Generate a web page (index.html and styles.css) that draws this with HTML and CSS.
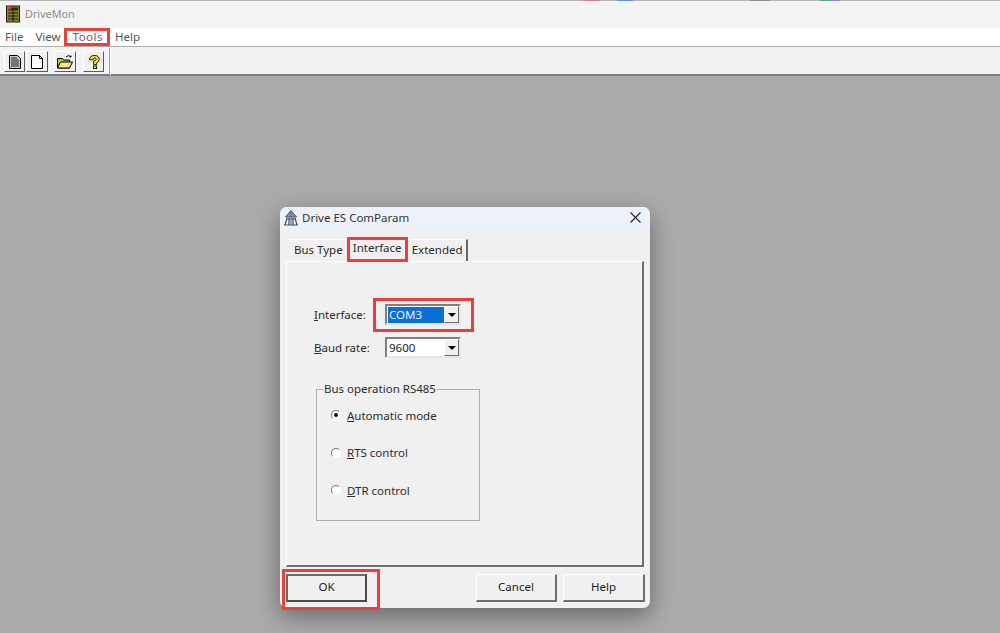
FILE: index.html
```html
<!DOCTYPE html>
<html lang="en">
<head>
<meta charset="utf-8">
<title>DriveMon</title>
<link rel="stylesheet" href="styles.css">
</head>
<body>
<div class="app">
  <div class="crop-strip"></div>
  <header class="titlebar">
    <svg class="app-icon" width="16" height="18" viewBox="0 0 16 18">
      <rect x="1.500" y="1" width="13" height="16" fill="#8a8434" stroke="#1e1e10"/>
      <rect x="3" y="2.500" width="10" height="3" fill="#2b2a12"/>
      <path d="M3 8h10M3 11h10M3 14h10M8 6v10" stroke="#1e1e10" stroke-width="1.200"/>
      <rect x="3" y="1.500" width="3" height="3" fill="#e0402a"/>
    </svg>
    <span class="app-name">DriveMon</span>
  </header>
  <nav class="menubar">
    <span class="menu-item">File</span>
    <span class="menu-item">View</span>
    <span class="menu-item mark">Tools</span>
    <span class="menu-item">Help</span>
  </nav>
  <div class="toolbar">
    <button class="tool tool-a">
      <svg width="14" height="16" viewBox="0 0 14 16"><path d="M1.500 1.500h8l3 3v10h-11z" fill="#c8c8c8" stroke="#000"/><path d="M3 4h6M3 6h8M3 8h8M3 10h8M3 12h8" stroke="#222"/></svg>
    </button>
    <button class="tool tool-b">
      <svg width="14" height="16" viewBox="0 0 14 16"><path d="M1.500 1.500h8l3 3v10h-11z" fill="#fff" stroke="#000"/><path d="M9.500 1.500v3h3" fill="none" stroke="#000"/></svg>
    </button>
    <button class="tool tool-c">
      <svg width="18" height="16" viewBox="0 0 18 16"><path d="M1.500 4.500h5l1 1.500h6v8h-12z" fill="#c9c23c" stroke="#000"/><path d="M1.500 14l3-6h12l-3 6z" fill="#f0e88a" stroke="#000"/><path d="M10 3q3-3 5 0M15 3l-1.500-.5M15 3v-1.500" fill="none" stroke="#000"/></svg>
    </button>
    <button class="tool tool-d">
      <svg width="14" height="18" viewBox="0 0 16 18"><path d="M3 6.500q0-5 5.500-5t5.500 4.500q0 2.500-3 4v2H7.500v-4q3-.5 3-2.500 0-1.200-1.800-1.200T7 6.500z" fill="#f2e536" stroke="#000"/><rect x="7.500" y="13.500" width="3.500" height="3" fill="#f2e536" stroke="#000"/></svg>
    </button>
    <div class="tool-sep"></div>
  </div>
  <main class="workspace">
    <section class="dialog">
      <header class="dialog-title">
        <svg class="dialog-icon" width="16" height="16" viewBox="0 0 16 16">
          <path d="M8 .5 2.500 7h11z" fill="#8b919c" stroke="#4a4f58"/>
          <path d="M3 9h10M1 15h14M4 8l-2 7M12 8l2 7M6 8v7M10 8v7" stroke="#4a4f58" stroke-width="1.200"/>
          <path d="M8 1v14" stroke="#5c78b8" stroke-width="1.200"/>
        </svg>
        <span class="dialog-name">Drive ES ComParam</span>
        <svg class="dialog-close" width="11" height="11" viewBox="0 0 11 11"><path d="M.5.5l10 10M10.500.5l-10 10" stroke="#222" stroke-width="1.100"/></svg>
      </header>
      <div class="tabs">
        <span class="tab">Bus Type</span>
        <span class="tab tab-active">Interface</span>
        <span class="tab tab-last">Extended</span>
      </div>
      <div class="pane">
        <div class="field">
          <label class="field-label"><u>I</u>nterface:</label>
          <div class="combo combo-marked">
            <span class="combo-text combo-selected">COM3</span>
            <span class="combo-arrow"></span>
          </div>
        </div>
        <div class="field">
          <label class="field-label"><u>B</u>aud rate:</label>
          <div class="combo">
            <span class="combo-text">9600</span>
            <span class="combo-arrow"></span>
          </div>
        </div>
        <fieldset class="group">
          <legend class="group-title">Bus operation RS485</legend>
          <div class="radio"><span class="radio-dot radio-on"></span><span><u>A</u>utomatic mode</span></div>
          <div class="radio"><span class="radio-dot"></span><span><u>R</u>TS control</span></div>
          <div class="radio"><span class="radio-dot"></span><span><u>D</u>TR control</span></div>
        </fieldset>
      </div>
      <footer class="actions">
        <button class="btn btn-default">OK</button>
        <span class="actions-gap"></span>
        <button class="btn">Cancel</button>
        <button class="btn btn-help">Help</button>
      </footer>
    </section>
  </main>
</div>
</body>
</html>
```
FILE: styles.css
```css
* { box-sizing: border-box; }
html, body { margin: 0; height: 100%; }
body {
  font-family: "Noto Sans", "Open Sans", "Liberation Sans", sans-serif;
  font-size: 12px;
  color: #222;
  overflow: hidden;
}
.app { width: 1000px; height: 633px; display: flex; flex-direction: column; position: relative; }

.crop-strip {
  height: 1px;
  flex: none;
  background: linear-gradient(90deg, #b5b5b5 0 58.300%, #d08090 58.300% 60%, #b5b5b5 60% 61.700%, #6a8fd8 61.700% 63.300%, #b5b5b5 63.300% 75%, #8a8a8a 75% 77%, #b5b5b5 77% 82%, #60a090 82% 83.200%, #a080c0 83.200% 84%, #b5b5b5 84%);
}
.titlebar {
  height: 27px;
  flex: none;
  background: #f3f3f3;
  display: flex;
  align-items: center;
  padding: 0 0 2px 5px;
  gap: 4px;
}
.app-name { font-size: 10.800px; color: #8d8d8d; }

.menubar {
  height: 19px;
  flex: none;
  background: #fff;
  display: flex;
  align-items: center;
  padding: 0 0 0 5px;
  gap: 12px;
  border-bottom: 1px solid #b0b0b0;
  font-size: 11.500px;
  color: #555;
}
.menu-item { line-height: 16px; }
.menu-item.mark {
  line-height: 12px;
  padding: 0 4px 0 6px;
  margin: 0 -4px 0 -6px;
  letter-spacing: .5px;
  outline: 3px solid #e8413c;
  color: #666;
}

.toolbar {
  height: 29px;
  flex: none;
  background: #f2f2f2;
  display: flex;
  align-items: center;
  padding: 2px 0 0 4px;
  border-bottom: 2px solid #808080;
}
.tool {
  width: 21px;
  height: 21px;
  padding: 0;
  background: #f0f0f0;
  border: 1px solid;
  border-color: #fff #5a5a5a #5a5a5a #fff;
  display: flex;
  align-items: center;
  justify-content: center;
}
.tool-b { margin-left: 1px; width: 22px; }
.tool-c { margin-left: 6px; width: 22px; }
.tool-d { margin-left: 7px; }
.tool-sep { width: 2px; height: 27px; background: #a0a0a0; border-right: 1px solid #fff; margin-left: 5px; }

.workspace { flex: 1; background: #ababab; position: relative; }

.dialog {
  position: absolute;
  left: 280px;
  top: 131px;
  width: 370px;
  height: 401px;
  background: #f0f0f0;
  border-radius: 7px;
  box-shadow: 0 8px 24px rgba(0,0,0,.4);
  display: flex;
  flex-direction: column;
  color: #2b2b2b;
}
.dialog-title {
  height: 23px;
  flex: none;
  display: flex;
  align-items: center;
  padding: 0 9px 2px 3px;
  gap: 3px;
  background: #edf2fa;
  border-radius: 7px 7px 0 0;
  font-size: 11.500px;
}
.dialog-icon { flex: none; }
.dialog-name { flex: 1; color: #333; }

.tabs {
  height: 31px;
  flex: none;
  display: flex;
  align-items: flex-end;
  padding-left: 8px;
}
.tab {
  height: 22px;
  display: flex;
  align-items: center;
  padding: 0 6px 2px;
  font-size: 11.500px;
  border-top: 1px solid #fff;
}
.tab-active {
  height: 25px;
  width: 61px;
  justify-content: center;
  padding: 0 0 5px;
  margin: 0 -1px -1px -2px;
  background: #f0f0f0;
  border: 3px solid #e8413c;
  position: relative;
}
.tab-last { border-right: 2px solid #666; padding: 0 3px 2px 5px; }

.pane {
  width: 358px;
  height: 306px;
  margin-left: 6px;
  flex: none;
  border: 1px solid;
  border-color: #fff #6d6d6d #6d6d6d #fff;
  border-width: 1px 2px 2px 1px;
  padding: 42px 0 0 27px;
}
.field {
  display: flex;
  align-items: center;
  height: 21px;
  margin-bottom: 12px;
  font-size: 11.500px;
}
.field-label { width: 71px; padding-bottom: 1px; }
.combo {
  width: 76px;
  height: 21px;
  display: flex;
  align-items: center;
  background: #fff;
  border: 2px solid;
  border-color: #7f7f7f #e5e5e5 #e5e5e5 #7f7f7f;
  padding: 0 1px;
  position: relative;
}
.combo-text { flex: 1; padding: 0 0 1px 1px; line-height: 15px; font-size: 11.500px; color: #222; }
.combo-selected { background: #0a6fd6; color: #e8f2ff; }
.combo-arrow {
  width: 15px;
  height: 17px;
  flex: none;
  background: #f0f0f0;
  border: 1px solid;
  border-color: #fff #6d6d6d #6d6d6d #fff;
  margin-right: -1px;
  position: relative;
}
.combo-arrow::after {
  content: "";
  position: absolute;
  left: 3px;
  top: 6px;
  border: 4px solid transparent;
  border-top: 4px solid #000;
  border-bottom: 0;
}
.combo-marked::before {
  content: "";
  position: absolute;
  inset: -8px -15px -9px -14px;
  border: 3px solid #e8413c;
  pointer-events: none;
}

.group {
  width: 164px;
  height: 140px;
  margin: 23px 0 0 2px;
  padding: 0 0 0 14px;
  border: 1px solid #adadad;
  font-size: 11.500px;
}
.group-title { padding: 0 1px; margin-left: -8px; font-size: 11.500px; line-height: 16px; }
.radio { display: flex; align-items: center; gap: 6px; height: 16px; margin-bottom: 21.500px; }
.radio:first-of-type { margin-top: 10px; }
.radio-dot {
  width: 10px;
  height: 10px;
  border-radius: 50%;
  border: 1px solid;
  border-color: #7a7a7a #fff #fff #7a7a7a;
  background: #fff;
  position: relative;
  flex: none;
}
.radio-on::after {
  content: "";
  position: absolute;
  left: 2px;
  top: 2px;
  width: 4px;
  height: 4px;
  background: #111;
  border-radius: 50%;
}

.actions {
  flex: 1;
  display: flex;
  align-items: flex-start;
  padding: 7px 5px 0 6px;
  gap: 6px;
}
.actions-gap { flex: 1; }
.btn {
  width: 81px;
  height: 28px;
  padding: 0 0 3px;
  background: #f0f0f0;
  font: inherit;
  font-size: 11.500px;
  color: #222;
  border: 1px solid;
  border-color: #fff #6d6d6d #6d6d6d #fff;
  border-width: 1px 2px 2px 1px;
}
.btn-help { width: 82px; }
.btn-default {
  position: relative;
  border: 2px solid;
  border-color: #6a6a6a #4a4a4a #4a4a4a #6a6a6a;
}
.btn-default::before {
  content: "";
  position: absolute;
  inset: -7px -15px -10px -6px;
  border: 3px solid #e8413c;
  pointer-events: none;
}
```
